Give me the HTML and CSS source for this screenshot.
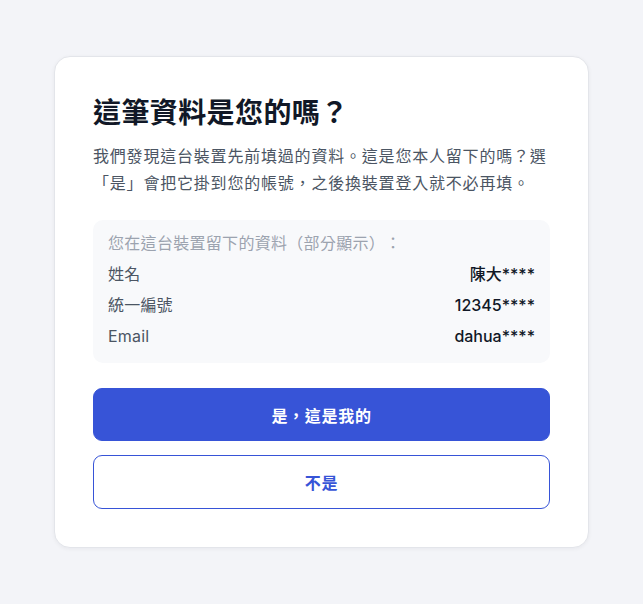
FILE: index.html
```
<!DOCTYPE html>
<html lang="zh-Hant">
<head>
<meta charset="utf-8">
<title>這筆資料是您的嗎？</title>
<link rel="stylesheet" href="styles.css">
</head>
<body>
<main class="card">
  <h1 class="title">這筆資料是您的嗎？</h1>
  <p class="desc">我們發現這台裝置先前填過的資料。這是您本人留下的嗎？選「是」會把它掛到您的帳號，之後換裝置登入就不必再填。</p>
  <section class="info">
    <div class="info-head">您在這台裝置留下的資料（部分顯示）：</div>
    <div class="row"><span class="label">姓名</span><span class="value">陳大****</span></div>
    <div class="row"><span class="label">統一編號</span><span class="value">12345****</span></div>
    <div class="row"><span class="label">Email</span><span class="value">dahua****</span></div>
  </section>
  <div class="actions">
    <button class="btn btn-primary" type="button">是，這是我的</button>
    <button class="btn btn-outline" type="button">不是</button>
  </div>
</main>
</body>
</html>
```

FILE: styles.css
```
* { box-sizing: border-box; }
html, body { margin: 0; padding: 0; }
body {
  min-height: 100vh;
  background: #f3f4f8;
  font-family: Inter, "Noto Sans CJK TC", "Noto Sans", sans-serif;
  text-spacing-trim: space-all;
  display: flex;
  align-items: center;
  justify-content: center;
}
.card {
  width: 535px;
  background: #ffffff;
  border: 1px solid #e3e5ea;
  border-radius: 16px;
  padding: 38px;
  box-shadow: 0 1px 4px rgba(16, 24, 40, 0.05);
  display: flex;
  flex-direction: column;
}
.title {
  margin: 0;
  font-size: 28px;
  line-height: 36px;
  font-weight: 700;
  letter-spacing: 0.4px;
  color: #111827;
}
.desc {
  margin: 12px 0 0;
  font-size: 16px;
  letter-spacing: 0.8px;
  line-height: 27px;
  color: #4b5563;
}
.info {
  margin-top: 23px;
  background: #f8f9fb;
  border-radius: 10px;
  padding: 12px 15px 15px;
  display: flex;
  flex-direction: column;
  gap: 7px;
}
.info-head {
  font-size: 16px;
  letter-spacing: 0.3px;
  line-height: 22px;
  color: #9ca3af;
  margin-bottom: 1px;
}
.row {
  display: flex;
  justify-content: space-between;
  align-items: center;
  font-size: 16px;
  line-height: 24px;
}
.label { color: #4b5563; letter-spacing: 0.2px; }
.value { color: #111827; font-weight: 500; }
.actions {
  margin-top: 25px;
  display: flex;
  flex-direction: column;
  gap: 14px;
}
.btn {
  width: 100%;
  font-family: inherit;
  font-size: 16px;
  letter-spacing: 0.7px;
  font-weight: 700;
  border-radius: 9px;
  cursor: pointer;
}
.btn-primary {
  height: 53px;
  background: #3754d7;
  border: 1px solid #3754d7;
  color: #ffffff;
}
.btn-outline {
  height: 54px;
  background: #ffffff;
  border: 1.5px solid #3754d7;
  color: #3754d7;
}
```
